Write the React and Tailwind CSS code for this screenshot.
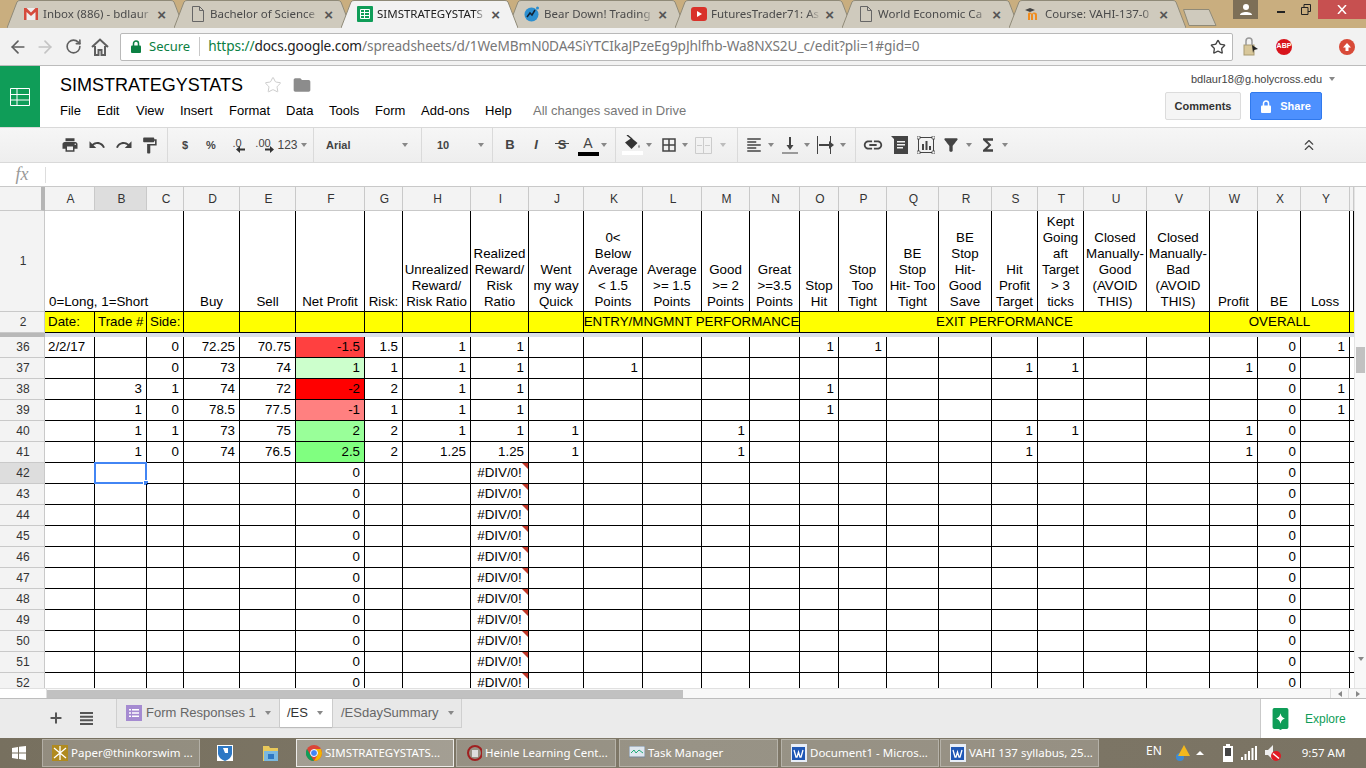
import { ArrowLeft, ArrowRight, RotateCw, Star, Plus, ChevronsUp } from "lucide-react";
import {
  MdPrint, MdUndo, MdRedo, MdFormatPaint, MdBorderAll, MdFormatAlignLeft,
  MdLink, MdFilterAlt, MdFunctions, MdFolder,
} from "react-icons/md";

const ARIAL = "font-['Liberation_Sans',Arial,sans-serif]";
const SEGOE = "font-['Noto_Sans',sans-serif]";
const COLS = "grid-cols-[45px_50px_52px_37px_56px_56px_69px_38px_68px_58px_55px_59px_59px_48px_50px_39px_48px_52px_53px_46px_46px_63px_63px_48px_43px_49px_4px]";

const LETTERS = ["A","B","C","D","E","F","G","H","I","J","K","L","M","N","O","P","Q","R","S","T","U","V","W","X","Y",""];

const HEADERS = [
  "Buy","Sell","Net Profit","Risk:","Unrealized\nReward/\nRisk Ratio","Realized\nReward/\nRisk\nRatio","Went\nmy way\nQuick",
  "0<\nBelow\nAverage\n< 1.5\nPoints","Average\n>= 1.5\nPoints","Good\n>= 2\nPoints","Great\n>=3.5\nPoints","Stop\nHit",
  "Stop\nToo\nTight","BE\nStop\nHit- Too\nTight","BE\nStop\nHit-\nGood\nSave","Hit\nProfit\nTarget",
  "Kept\nGoing\naft\nTarget\n> 3\nticks","Closed\nManually-\nGood\n(AVOID\nTHIS)","Closed\nManually-\nBad\n(AVOID\nTHIS)",
  "Profit","BE","Loss","",
];

const ROWS = [
  { n: 36, fill: "bg-[#ff4040]", v: { A: "2/2/17", C: 0, D: 72.25, E: 70.75, F: -1.5, G: 1.5, H: 1, I: 1, O: 1, P: 1, X: 0, Y: 1 } },
  { n: 37, fill: "bg-[#ccffcc]", v: { C: 0, D: 73, E: 74, F: 1, G: 1, H: 1, I: 1, K: 1, S: 1, T: 1, W: 1, X: 0 } },
  { n: 38, fill: "bg-[#ff0000]", v: { B: 3, C: 1, D: 74, E: 72, F: -2, G: 2, H: 1, I: 1, O: 1, X: 0, Y: 1 } },
  { n: 39, fill: "bg-[#ff8080]", v: { B: 1, C: 0, D: 78.5, E: 77.5, F: -1, G: 1, H: 1, I: 1, O: 1, X: 0, Y: 1 } },
  { n: 40, fill: "bg-[#99ff99]", v: { B: 1, C: 1, D: 73, E: 75, F: 2, G: 2, H: 1, I: 1, J: 1, M: 1, S: 1, T: 1, W: 1, X: 0 } },
  { n: 41, fill: "bg-[#80ff80]", v: { B: 1, C: 0, D: 74, E: 76.5, F: 2.5, G: 2, H: 1.25, I: 1.25, J: 1, M: 1, S: 1, W: 1, X: 0 } },
];
for (let n = 42; n <= 52; n++) ROWS.push({ n, fill: "", v: { F: 0, I: "#DIV/0!", X: 0 } });

function Caret({ className = "" }) {
  return <span className={`w-0 h-0 border-x-[3px] border-x-transparent border-t-[4px] border-t-[#888] ${className}`} />;
}

function PadLock({ color, className = "" }) {
  return (
    <svg width="10" height="13" viewBox="0 0 10 13" className={`shrink-0 ${className}`}>
      <path d="M2.500 6V3.500a2.500 2.500 0 0 1 5 0V6" fill="none" stroke={color} strokeWidth="1.500" />
      <rect y="5.500" width="10" height="7.500" rx="1" fill={color} />
    </svg>
  );
}

function DocIcon() {
  return (
    <svg width="12" height="16" viewBox="0 0 12 16" fill="none" stroke="#666" className="shrink-0">
      <path d="M.5.5h7l4 4v11H.5z M7.5.5v4h4" />
    </svg>
  );
}

const TABS = [
  {
    title: "Inbox (886) - bdlaur",
    icon: (
      <svg width="14" height="12" viewBox="0 0 14 12" className="shrink-0">
        <rect width="14" height="12" fill="#eee" />
        <path d="M0 0h2.500L7 4.500 11.500 0H14v12h-2.500V4L7 8 2.500 4v8H0z" fill="#d54b3d" />
      </svg>
    ),
  },
  { title: "Bachelor of Science", icon: <DocIcon /> },
  {
    title: "SIMSTRATEGYSTATS",
    active: true,
    icon: (
      <svg width="16" height="16" viewBox="0 0 16 16" className="shrink-0">
        <rect width="16" height="16" rx="1" fill="#0f9d58" />
        <path d="M3.500 3.500h9v9h-9z M3.500 6.500h9 M3.500 9.500h9 M7.500 3.500v9" fill="none" stroke="#fff" />
      </svg>
    ),
  },
  {
    title: "Bear Down! Trading",
    icon: (
      <svg width="16" height="16" viewBox="0 0 16 16" className="shrink-0">
        <circle cx="7.500" cy="8.500" r="7" fill="#2c8fd0" />
        <path d="M3 11l3-4 2 2 3-5" fill="none" stroke="#123" strokeWidth="1.500" />
        <circle cx="13.500" cy="2" r="1.500" fill="#2c8fd0" />
      </svg>
    ),
  },
  {
    title: "FuturesTrader71: As",
    icon: (
      <svg width="16" height="16" viewBox="0 0 16 16" className="shrink-0">
        <rect y="1" width="16" height="14" rx="3" fill="#d9322a" />
        <path d="M6 5l5 3-5 3z" fill="#fff" />
      </svg>
    ),
  },
  { title: "World Economic Ca", icon: <DocIcon /> },
  {
    title: "Course: VAHI-137-0",
    icon: (
      <svg width="16" height="14" viewBox="0 0 16 14" className="shrink-0">
        <path d="M0 3l5-2 5 2-5 2z" fill="#444" />
        <path d="M3 13V7c0-2 3-2 4 0 1-2 5-2 5 1v5h-2V8c-1-2-2-1-2 0v5H6V8C5 6 5 7 5 8v5z" fill="#f08c1e" />
      </svg>
    ),
  },
];

function BrowserTab({ tab }) {
  return (
    <div className={`relative w-[177px] h-[28px] -mr-[10px] shrink-0 flex items-center pl-[16px] pr-[18px] gap-[4px] ${tab.active ? "z-10" : ""}`}>
      <svg className="absolute inset-0" width="177" height="28" viewBox="0 0 177 28">
        <path
          d="M0 28L10 2Q11 .5 13 .5H164Q166 .5 167 2L177 28"
          fill={tab.active ? "#f2f2f2" : "#cfcabd"}
          stroke="#8f8a78"
        />
      </svg>
      <span className="relative flex w-[16px] justify-center shrink-0">{tab.icon}</span>
      <span className={`relative flex-1 overflow-hidden whitespace-nowrap text-[11.500px] pb-[1px] ${SEGOE} ${tab.active ? "text-[#222]" : "text-[#4a4a4a]"} [mask-image:linear-gradient(to_right,black_88%,transparent)]`}>
        {tab.title}
      </span>
      <span className="relative text-[15px] leading-none text-[#555] font-bold font-['Liberation_Sans',sans-serif]">×</span>
    </div>
  );
}

function TabStrip() {
  return (
    <div className="h-[28px] bg-[#c9ae7f] flex shrink-0 pl-[7px] relative">
      {TABS.map((t) => <BrowserTab key={t.title} tab={t} />)}
      <svg width="36" height="17" viewBox="0 0 36 17" className="ml-[7px] mt-[9px] shrink-0 relative">
        <path d="M.5.5H26L33 16.500H6z" fill="#cfcabd" stroke="#8f8a78" />
      </svg>
      <div className="ml-auto flex items-start">
        <div className="w-[25px] h-[19px] bg-[#7d6f57] flex items-center justify-center mr-[10px]">
          <svg width="12" height="11" viewBox="0 0 12 11" fill="#fff"><circle cx="6" cy="3" r="3" /><path d="M0 11c0-4 12-4 12 0z" /></svg>
        </div>
        <div className="w-[25px] h-[19px] flex items-center justify-center">
          <span className="w-[8px] h-[2px] bg-[#222] mt-[4px]" />
        </div>
        <div className="w-[25px] h-[19px] flex items-center justify-center">
          <svg width="10" height="11" viewBox="0 0 10 11" fill="none" stroke="#222"><path d="M.5 3.500h6.500v7H.5z M3 3V.5h6.500v7H7" /></svg>
        </div>
        <div className="w-[48px] h-[19px] bg-[#c75050] flex items-center justify-center">
          <svg width="10" height="9" viewBox="0 0 10 9" stroke="#fff" strokeWidth="1.500"><path d="M1 0l8 9M9 0L1 9" /></svg>
        </div>
      </div>
    </div>
  );
}

function AddressBar() {
  return (
    <div className="h-[38px] bg-[#f2f2f2] border-b border-[#bcbcbc] flex items-center shrink-0">
      <div className="w-[120px] flex items-center pl-[8px] shrink-0">
        <ArrowLeft size={20} strokeWidth={2} className="text-[#5f5f5f]" />
        <ArrowRight size={20} strokeWidth={2} className="text-[#c4c4c4] ml-[7px]" />
        <RotateCw size={17} strokeWidth={2.300} className="text-[#5f5f5f] ml-[10px]" />
        <svg width="18" height="18" viewBox="0 0 18 18" fill="none" stroke="#5f5f5f" strokeWidth="2" className="ml-[9px]">
          <path d="M1 9l8-7.500L17 9M4 8v9h3.500v-5h3v5H14V8" />
        </svg>
      </div>
      <div className={`w-[1113px] h-[28px] bg-white border border-[#b9b9b9] rounded-[2px] flex items-center pl-[9px] shrink-0 ${SEGOE}`}>
        <PadLock color="#0b8043" className="ml-[1px]" />
        <span className="text-[#0b8043] ml-[8px] text-[13px]">Secure</span>
        <span className="w-px h-[19px] bg-[#c8c8c8] ml-[9px] mr-[8px]" />
        <span className="whitespace-nowrap text-[13.650px] tracking-[-0.1px]">
          <span className="text-[#0b8043]">https://</span>
          <span className="text-[#222]">docs.google.com</span>
          <span className="text-[#777]">/spreadsheets/d/1WeMBmN0DA4SiYTCIkaJPzeEg9pJhlfhb-Wa8NXS2U_c/edit?pli=1#gid=0</span>
        </span>
        <Star size={16} strokeWidth={2} className="ml-auto mr-[6px] text-[#444] shrink-0" />
      </div>
      <svg width="16" height="20" viewBox="0 0 16 20" className="ml-[10px] shrink-0">
        <rect x="1" y="8" width="10" height="10" fill="#d8c79a" stroke="#a89a70" />
        <path d="M3 8V4a3 3 0 0 1 6 0v4" fill="none" stroke="#999" strokeWidth="1.500" />
        <path d="M9 8l6 4-4 1-1 3z" fill="#222" />
      </svg>
      <div className="ml-[17px] w-[16px] h-[16px] rounded-full bg-[#d8141c] flex items-center justify-center text-white text-[7px] font-bold font-['Liberation_Sans',sans-serif] shrink-0">ABP</div>
      <div className="ml-[47px] w-[16px] h-[16px] rounded-full bg-[#d84a38] flex items-center justify-center shrink-0">
        <svg width="10" height="10" viewBox="0 0 10 10" fill="#fff"><path d="M5 1l4 4.500H6.500V9h-3V5.500H1z" /></svg>
      </div>
    </div>
  );
}

function SheetsHeader() {
  const menu = [
    ["File", "w-[37px]"], ["Edit", "w-[39px]"], ["View", "w-[44px]"], ["Insert", "w-[49px]"], ["Format", "w-[57px]"],
    ["Data", "w-[43px]"], ["Tools", "w-[46px]"], ["Form", "w-[46px]"], ["Add-ons", "w-[64px]"], ["Help", "w-[48px]"],
  ];
  return (
    <div className={`h-[61px] bg-white flex shrink-0 ${ARIAL}`}>
      <div className="w-[40px] bg-[#0f9d58] flex items-center justify-center shrink-0">
        <svg width="20" height="18" viewBox="0 0 20 18" fill="none" stroke="#fff">
          <path d="M.5.5h19v17H.5z M.5 6.500h19 M.5 12h19 M7 .5v17" />
        </svg>
      </div>
      <div className="pl-[20px] flex flex-col">
        <div className="flex items-center h-[38px]">
          <span className="text-[18px] text-black w-[204px]">SIMSTRATEGYSTATS</span>
          <Star size={18} strokeWidth={1} className="text-[#bbb]" />
          <MdFolder size={20} className="text-[#8c8c8c] ml-[10px]" />
        </div>
        <div className="flex items-center text-[13px] text-black h-[14px]">
          {menu.map(([m, w]) => <span key={m} className={w}>{m}</span>)}
          <span className="text-[#777]">All changes saved in Drive</span>
        </div>
      </div>
      <div className="ml-auto w-[201px] flex flex-col shrink-0">
        <div className="h-[26px] flex items-center text-[11px] text-[#444] pl-[26px]">
          bdlaur18@g.holycross.edu
          <Caret className="ml-[7px]" />
        </div>
        <div className="flex">
          <div className="w-[76px] h-[28px] bg-[#f5f5f5] border border-[#dcdcdc] rounded-[2px] flex items-center justify-center text-[11px] font-bold text-[#333]">Comments</div>
          <div className="w-[72px] h-[28px] ml-[9px] bg-[#4d90fe] border border-[#3079ed] rounded-[2px] flex items-center justify-center gap-[9px] text-[11px] font-bold text-white">
            <PadLock color="#fff" />
            Share
          </div>
        </div>
      </div>
    </div>
  );
}

function Tool({ w = "w-[26px]", className = "", children }) {
  return <div className={`flex items-center justify-center shrink-0 text-[#444] ${w} ${className}`}>{children}</div>;
}

function Sep({ className = "" }) {
  return <span className={`w-px h-full bg-[#dadada] shrink-0 ${className}`} />;
}

function SmallCaret({ className = "" }) {
  return <Tool w="w-[6px]" className={className}><Caret /></Tool>;
}

function DecimalArrow({ flip }) {
  return (
    <svg width="9" height="7" viewBox="0 0 9 7" fill="#333" className={`absolute right-[-3px] top-[11px] ${flip ? "rotate-180" : ""}`}>
      <path d="M0 2.500h5V0l4 3.500L5 7V4.500H0z" />
    </svg>
  );
}

function Toolbar() {
  return (
    <div className={`h-[36px] bg-gradient-to-b from-[#f6f6f6] to-[#eeeeee] border-t border-b border-[#d9d9d9] flex items-center shrink-0 pl-[56px] ${ARIAL}`}>
      <Tool w="w-[27px]"><MdPrint size={18} /></Tool>
      <Tool w="w-[27px]"><MdUndo size={18} /></Tool>
      <Tool w="w-[27px]"><MdRedo size={18} /></Tool>
      <Tool w="w-[25px]"><MdFormatPaint size={19} /></Tool>
      <Sep className="ml-[5px]" />
      <Tool className="ml-[4px] text-[11px] font-bold">$</Tool>
      <Tool className="text-[11px] font-bold">%</Tool>
      <Tool className="text-[11px] text-[#333]"><span className="relative -mt-[3px]">.0<DecimalArrow flip /></span></Tool>
      <Tool className="text-[11px] text-[#333]"><span className="relative -mt-[3px]">.00<DecimalArrow /></span></Tool>
      <Tool w="w-[32px]" className="text-[12px] gap-[3px] text-[#333]">123<Caret /></Tool>
      <Sep className="ml-[5px]" />
      <div className="w-[107px] h-full pl-[12px] pr-[13px] flex items-center justify-between text-[11px] font-bold text-[#444] shrink-0">Arial<Caret /></div>
      <Sep />
      <div className="w-[70px] h-full pl-[15px] pr-[8px] flex items-center justify-between text-[11px] font-bold text-[#444] shrink-0">10<Caret /></div>
      <Sep />
      <Tool className="ml-[4px] text-[13px] font-bold">B</Tool>
      <Tool className="text-[13px] font-bold italic">I</Tool>
      <Tool className="text-[13px] font-bold"><span className="relative">S<span className="absolute -left-[3px] -right-[3px] top-[8px] h-px bg-[#444]" /></span></Tool>
      <Tool>
        <span className="flex flex-col items-center text-[14px] leading-[15px] pt-[1px]">A<span className="w-[21px] h-[4px] bg-black mt-[1px]" /></span>
      </Tool>
      <SmallCaret />
      <Sep className="ml-[8px]" />
      <Tool w="w-[28px]" className="ml-[2px]">
        <span className="flex flex-col items-center">
          <svg width="18" height="15" viewBox="0 0 18 15" fill="#333">
            <path d="M2 7.500L8.500 3l6 5-6 6z" />
            <path d="M4 0l5 4" stroke="#333" strokeWidth="1.500" />
            <path d="M16 9.500q2 2.500 0 3.500-2-1-0-3.500z" fill="#999" />
          </svg>
          <span className="w-[21px] h-[4px] bg-white mt-[1px]" />
        </span>
      </Tool>
      <SmallCaret />
      <Tool className="ml-[4px]"><MdBorderAll size={18} /></Tool>
      <SmallCaret />
      <Tool className="ml-[2px]">
        <svg width="17" height="17" viewBox="0 0 17 17" fill="none" stroke="#ccc"><path d="M.5.5h16v16H.5z M8.500.5v16" /><path d="M2 8.500h5M10 8.500h5" /></svg>
      </Tool>
      <SmallCaret className="ml-[4px] opacity-50" />
      <Sep className="ml-[11px]" />
      <Tool className="ml-[3px]"><MdFormatAlignLeft size={18} /></Tool>
      <SmallCaret className="ml-[1px]" />
      <Tool className="ml-[3px]">
        <svg width="16" height="18" viewBox="0 0 16 18" fill="#444"><path d="M0 16.500h16v1H0z M7 1h2v8h2.500L8 14 4.500 9H7z" /></svg>
      </Tool>
      <SmallCaret className="ml-[1px]" />
      <Tool className="ml-[3px]">
        <svg width="18" height="18" viewBox="0 0 18 18" fill="#444"><path d="M0 0h1v18H0z M13 0h1v18h-1z M2 8h10V5l5 4-5 4v-3H2z" /></svg>
      </Tool>
      <SmallCaret className="ml-[1px]" />
      <Sep className="ml-[9px]" />
      <Tool className="ml-[4px]"><MdLink size={22} /></Tool>
      <Tool className="ml-[1px]">
        <svg width="18" height="18" viewBox="0 0 18 18" fill="#444"><path d="M0 0h17v18H3V3z" /><path d="M6 5h8v1.500H6zM6 8h8v1.500H6zM6 11h6v1.500H6z" fill="#f2f2f2" /></svg>
      </Tool>
      <Tool>
        <svg width="18" height="18" viewBox="0 0 18 18" fill="#444">
          <path d="M1.500 1.500h15v15h-15z" fill="none" stroke="#444" />
          <path d="M5 8h2v6H5zM8.500 5h2v9h-2zM12 10h2v4h-2z" />
          <path d="M0 0h3v3H0zM15 0h3v3h-3zM0 15h3v3H0zM15 15h3v3h-3z" fill="#f2f2f2" stroke="#444" strokeWidth=".7" />
        </svg>
      </Tool>
      <Tool w="w-[24px]"><MdFilterAlt size={20} /></Tool>
      <SmallCaret className="ml-[3px]" />
      <Tool className="ml-[3px]"><MdFunctions size={20} /></Tool>
      <SmallCaret className="ml-[1px]" />
      <Tool className="ml-[288px]"><ChevronsUp size={18} strokeWidth={1.500} /></Tool>
    </div>
  );
}

function FormulaBar() {
  return (
    <div className="h-[24px] bg-white border-b border-[#c9c9c9] flex items-center shrink-0">
      <span className="w-[45px] text-center text-[#999] italic font-['Liberation_Serif',serif] text-[18px] pr-[1px]">fx</span>
      <span className="w-px h-[16px] bg-[#ddd]" />
    </div>
  );
}

function ColumnHeaders() {
  return (
    <div className={`grid ${COLS} h-[24px] shrink-0 bg-[#f3f3f3] text-[12px] text-[#333] ${ARIAL}`}>
      <div className="border-b border-r-[4px] border-b-[#c9c9c9] border-r-[#b5b5b5]" />
      {LETTERS.map((l, i) => (
        <div key={i} className={`flex items-center justify-center pl-[2px] border-b border-r border-[#c9c9c9] ${l === "B" ? "bg-[#dddddd]" : ""}`}>{l}</div>
      ))}
    </div>
  );
}

function RowHead({ n, active }) {
  return (
    <div className={`flex items-center justify-center pl-[2px] border-b border-r border-[#c9c9c9] text-[12px] text-[#333] ${active ? "bg-[#dddddd]" : "bg-[#f3f3f3]"}`}>{n}</div>
  );
}

function HeaderRows() {
  return (
    <>
      <div className={`grid ${COLS} h-[101px] shrink-0 text-[13.330px] leading-[16px] text-black ${ARIAL}`}>
        <RowHead n={1} />
        <div className="col-span-3 border-r border-b border-black flex items-end pl-[4px] pb-[1px]">0=Long, 1=Short</div>
        {HEADERS.map((h, i) => (
          <div key={i} className="border-r border-b border-black flex items-end justify-center text-center whitespace-pre-line pb-[1px] overflow-hidden">{h}</div>
        ))}
      </div>
      <div className={`grid ${COLS} h-[21px] shrink-0 text-[13.330px] text-black ${ARIAL}`}>
        <RowHead n={2} />
        <div className="bg-[#ffff00] border-r border-b border-black flex items-center pl-[3px]">Date:</div>
        <div className="bg-[#ffff00] border-r border-b border-black flex items-center pl-[3px]">Trade #</div>
        <div className="bg-[#ffff00] border-r border-b border-black flex items-center pl-[3px]">Side:</div>
        {[0, 1, 2, 3, 4, 5, 6].map((i) => <div key={i} className="bg-[#ffff00] border-r border-b border-black" />)}
        <div className="col-span-4 bg-[#ffff00] border-r border-b border-black flex items-center justify-center whitespace-nowrap">ENTRY/MNGMNT PERFORMANCE</div>
        <div className="col-span-8 bg-[#ffff00] border-r border-b border-black flex items-center justify-center">EXIT PERFORMANCE</div>
        <div className="col-span-3 bg-[#ffff00] border-r border-b border-black flex items-center justify-center">OVERALL</div>
        <div className="bg-[#ffff00] border-b border-black" />
      </div>
      <div className="h-[4px] shrink-0 flex">
        <div className="w-[45px] bg-[#b8b8b8]" />
        <div className="flex-1 bg-[#dadfe8]" />
      </div>
    </>
  );
}

function DataRow({ row }) {
  return (
    <div className={`grid ${COLS} h-[21px] shrink-0 text-[13.330px] text-black ${ARIAL}`}>
      <RowHead n={row.n} active={row.n === 42} />
      {LETTERS.map((l, i) => {
        const value = row.v[l];
        const isError = value === "#DIV/0!";
        const selected = row.n === 42 && l === "B";
        return (
          <div
            key={i}
            className={`relative flex items-center px-[4px] whitespace-nowrap overflow-visible ${l ? "border-r" : ""} border-b border-black
              ${l === "A" || isError ? (isError ? "justify-center" : "justify-start pl-[3px]") : "justify-end"}
              ${l === "F" ? row.fill : ""}`}
          >
            {value}
            {isError && <span className="absolute right-0 top-0 w-0 h-0 border-l-[6px] border-l-transparent border-t-[6px] border-t-[#c0392b]" />}
            {selected && (
              <span className="absolute -left-px -top-px right-[-1px] bottom-[-1px] border-2 border-[#4285f4]">
                <span className="absolute -right-[4px] -bottom-[4px] w-[6px] h-[6px] bg-[#4285f4] border border-white" />
              </span>
            )}
          </div>
        );
      })}
    </div>
  );
}

function SheetGrid() {
  return (
    <div className="flex-1 min-h-0 flex bg-white overflow-hidden">
      <div className="w-[1354px] shrink-0 flex flex-col overflow-hidden">
        <ColumnHeaders />
        <HeaderRows />
        {ROWS.map((r) => <DataRow key={r.n} row={r} />)}
      </div>
      <div className="flex-1 bg-[#f8f8f8] border-l border-[#e4e4e4] flex flex-col items-center">
        <div className="h-[160px] shrink-0" />
        <div className="w-[9px] h-[26px] bg-[#c1c1c1]" />
        <div className="mt-auto mb-[4px]"><Caret /></div>
      </div>
    </div>
  );
}

function HScroll() {
  return (
    <div className="h-[10px] bg-[#f8f8f8] border-t border-[#e0e0e0] flex items-center shrink-0">
      <div className="w-[47px] h-full bg-white border-r border-[#e0e0e0]" />
      <div className="w-[636px] h-[8px] bg-[#c1c1c1]" />
      <div className="ml-auto flex w-[36px] h-full">
        <div className="w-[18px] border-l border-[#ddd] flex items-center justify-center"><span className="w-0 h-0 border-y-[3px] border-y-transparent border-r-[4px] border-r-[#888]" /></div>
        <div className="w-[18px] border-l border-[#ddd] flex items-center justify-center"><span className="w-0 h-0 border-y-[3px] border-y-transparent border-l-[4px] border-l-[#888]" /></div>
      </div>
    </div>
  );
}

function SheetTabs() {
  return (
    <div className={`h-[40px] bg-[#ebebeb] border-t border-[#bdbdbd] flex shrink-0 ${ARIAL}`}>
      <div className="w-[116px] flex items-center shrink-0 text-[#555] pb-[1px]">
        <Plus size={16} strokeWidth={3} className="ml-[48px]" />
        <svg width="13" height="13" viewBox="0 0 13 13" fill="#555" className="ml-[16px]">
          <path d="M0 0h13v2H0zM0 3.700h13v2H0zM0 7.300h13v2H0zM0 11h13v2H0z" />
        </svg>
      </div>
      <div className="w-[164px] h-[29px] bg-[#e8e8e8] border border-t-0 border-[#cfcfcf] flex items-center pl-[9px] text-[13px] text-[#666] shrink-0">
        <svg width="16" height="16" viewBox="0 0 16 16" className="shrink-0 mr-[4px]">
          <rect width="16" height="16" fill="#a58bd1" />
          <path d="M3 4h2v1.500H3zM6 4h7v1.500H6zM3 7.200h2v1.500H3zM6 7.200h7v1.500H6zM3 10.500h2V12H3zM6 10.500h7V12H6z" fill="#fff" />
        </svg>
        Form Responses 1
        <Caret className="ml-[9px]" />
      </div>
      <div className="w-[52px] h-[28px] bg-white flex items-center pl-[7px] text-[13px] text-[#333] shrink-0 shadow-[0_1px_1px_#bbb] z-10">
        /ES
        <Caret className="ml-[9px]" />
      </div>
      <div className="w-[130px] h-[29px] bg-[#e8e8e8] border border-t-0 border-[#cfcfcf] flex items-center pl-[8px] text-[13px] text-[#666] shrink-0">
        /ESdaySummary
        <Caret className="ml-[9px]" />
      </div>
      <div className="ml-auto w-[106px] bg-white border-l border-[#c9c9c9] flex items-center pl-[11px] shrink-0">
        <svg width="17" height="22" viewBox="0 0 18 25">
          <path d="M2 0h14a2 2 0 0 1 2 2v20a2 2 0 0 1-2 2h-5l-2 1-2-1H2a2 2 0 0 1-2-2V2a2 2 0 0 1 2-2z" fill="#0f9d58" />
          <path d="M9 6q1 5 5 6-4 1-5 6-1-5-5-6 4-1 5-6z" fill="#fff" />
        </svg>
        <span className="text-[12px] text-[#0f9d58] ml-[16px]">Explore</span>
      </div>
    </div>
  );
}

function WinButton({ className, children, text, active }) {
  return (
    <div className={`h-[28px] flex items-center gap-[2px] pl-[8px] border shrink-0 ${active ? "bg-white/30 border-white/80" : "bg-white/20 border-white/30"} ${className}`}>
      <span className="w-[18px] flex justify-center shrink-0">{children}</span>
      <span className="text-[11.500px] text-white whitespace-nowrap">{text}</span>
    </div>
  );
}

function WordIcon() {
  return (
    <svg width="16" height="18" viewBox="0 0 16 18">
      <rect width="16" height="18" fill="#e8eef8" />
      <rect x="1" y="3" width="13" height="13" fill="#1f57b5" />
      <path d="M3 6l2 7h1l1.500-5L9 13h1l2-7" fill="none" stroke="#fff" strokeWidth="1.300" />
    </svg>
  );
}

function Taskbar() {
  return (
    <div className={`h-[30px] bg-gradient-to-r from-[#77705f] via-[#7f7868] to-[#7a7363] flex items-center shrink-0 pl-[12px] ${SEGOE}`}>
      <svg width="14" height="14" viewBox="0 0 14 14" fill="#fff" className="shrink-0">
        <path d="M0 2l6-1v5.500H0zM7 .8L14 0v6.500H7zM0 7.500h6V13l-6-1zM7 7.500h7V14l-7-.9z" />
      </svg>
      <WinButton className="w-[158px] ml-[16px]" text="Paper@thinkorswim ...">
        <svg width="16" height="16" viewBox="0 0 16 16"><rect width="16" height="16" fill="#b08a1e" /><path d="M8 1v14M2 3l12 10M14 3L2 13" stroke="#fff" strokeWidth="1.300" /></svg>
      </WinButton>
      <svg width="16" height="16" viewBox="0 0 16 16" className="ml-[17px] shrink-0">
        <path d="M0 0h16v16H0z" fill="#fff" />
        <path d="M1 1h14v8q-1 5-7 7-6-2-7-7z" fill="#2d78c4" />
        <path d="M6 3h5v5H8z" fill="#fff" />
      </svg>
      <svg width="16" height="16" viewBox="0 0 16 16" className="ml-[30px] shrink-0">
        <path d="M0 1h6l1 2h8v13H0z" fill="#e8c85a" />
        <path d="M1 6h14v10H1z" fill="#7ab8e0" />
        <path d="M5 9h6v5H5z" fill="#2d78c4" />
      </svg>
      <WinButton active className="w-[158px] ml-[17px]" text="SIMSTRATEGYSTATS...">
        <svg width="16" height="16" viewBox="0 0 16 16">
          <circle cx="8" cy="8" r="8" fill="#db4437" />
          <path d="M8 16A8 8 0 0 1 1 4l4 7z" fill="#0f9d58" />
          <path d="M16 8a8 8 0 0 1-8 8l3.500-6L8 4h7z" fill="#f4b400" />
          <circle cx="8" cy="8" r="3.500" fill="#4285f4" stroke="#fff" />
        </svg>
      </WinButton>
      <WinButton className="w-[160px] ml-[2px]" text="Heinle Learning Cent...">
        <svg width="16" height="20" viewBox="0 0 16 20"><circle cx="9" cy="10" r="7" fill="none" stroke="#a02020" strokeWidth="2" /><rect x="6" y="7" width="6" height="7" fill="#ddd" /></svg>
      </WinButton>
      <WinButton className="w-[159px] ml-[3px]" text="Task Manager">
        <svg width="16" height="14" viewBox="0 0 16 14"><rect width="16" height="11" fill="#dfe7ef" stroke="#789" /><path d="M2 7l3-3 2 3 3-3 4 3" fill="none" stroke="#2a7" /></svg>
      </WinButton>
      <WinButton className="w-[158px] ml-[3px]" text="Document1 - Micros..."><WordIcon /></WinButton>
      <WinButton className="w-[159px] ml-[1px]" text="VAHI 137 syllabus, 25..."><WordIcon /></WinButton>
      <span className="ml-[47px] text-[12px] text-white -mt-[4px]">EN</span>
      <svg width="14" height="16" viewBox="0 0 14 16" className="ml-[14px]"><circle cx="4" cy="12" r="4" fill="#3f8ad0" /><path d="M8 0l6 11H2z" fill="#f2b81d" /></svg>
      <span className="ml-[6px] w-0 h-0 border-x-[4px] border-x-transparent border-b-[4px] border-b-white" />
      <svg width="10" height="18" viewBox="0 0 10 18" className="ml-[19px]"><path d="M3 0h4v2h3v16H0V2h3z" fill="#fff" /><path d="M2 4h6v8H2z" fill="#444" /></svg>
      <svg width="16" height="14" viewBox="0 0 16 14" fill="#fff" className="ml-[8px]"><path d="M0 11h2v3H0zM3.500 8h2v6h-2zM7 5h2v9H7zM10.500 2h2v12h-2zM14 0h2v14h-2z" /></svg>
      <svg width="16" height="18" viewBox="0 0 16 18" className="ml-[8px]"><path d="M0 6h3l5-5v15l-5-5H0z" fill="#eee" /><circle cx="11" cy="12" r="5" fill="#e01b24" /><path d="M8 9.500l6 5" stroke="#fff" strokeWidth="1.500" /></svg>
      <span className="ml-[21px] text-[11.500px] text-white whitespace-nowrap">9:57 AM</span>
    </div>
  );
}

export default function App() {
  return (
    <div className="w-[1366px] h-[768px] flex flex-col overflow-hidden bg-white">
      <TabStrip />
      <AddressBar />
      <SheetsHeader />
      <Toolbar />
      <FormulaBar />
      <SheetGrid />
      <HScroll />
      <SheetTabs />
      <Taskbar />
    </div>
  );
}
